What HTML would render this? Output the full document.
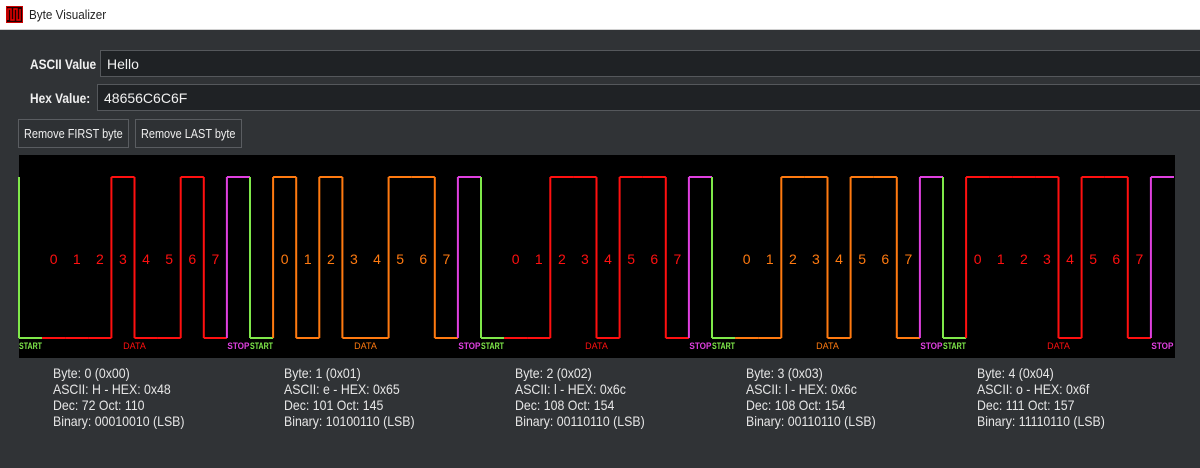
<!DOCTYPE html>
<html><head><meta charset="utf-8"><style>
body{margin:0;width:1200px;height:468px;background:#303336;font-family:"Liberation Sans",sans-serif;overflow:hidden;position:relative;color:#e6e6e6}
.tb{position:absolute;left:0;top:0;width:1200px;height:29px;background:#fff;border-bottom:1px solid #d0d0d0}
.tb span{position:absolute;left:29px;top:7px;font-size:13px;color:#222;transform:scaleX(.9);transform-origin:left}
.lbl{position:absolute;font-weight:bold;font-size:14px;color:#f0f0f0;transform:scaleX(.85);transform-origin:left}
.inp{position:absolute;background:#1f2225;border:1px solid #55585c;height:27px;box-sizing:border-box;font-size:14px;padding:5px 6px;color:#f0f0f0}
.btn{position:absolute;top:119px;height:29px;border:1px solid #5a5d61;background:#2e3134;box-sizing:border-box;font-size:13px;color:#eee;white-space:nowrap}
.btn span{position:absolute;left:5px;top:6px;transform:scaleX(.84);transform-origin:left}
.info{position:absolute;top:365px;font-size:14px;line-height:16px;color:#e6e6e6;white-space:pre;transform:scaleX(.88);transform-origin:left}
</style></head><body>
<div class="tb"><svg style="position:absolute;left:6px;top:6px" width="17" height="17"><rect x="0.5" y="0.5" width="16" height="16" fill="#200" stroke="#c00"/><path d="M2 14V3h3v11h3V3h3v11h3V3" fill="none" stroke="#e00" stroke-width="1.5"/></svg><span>Byte Visualizer</span></div>
<div class="lbl" style="left:30px;top:56px">ASCII Value</div>
<div class="inp" style="left:100px;top:50px;width:1110px">Hello</div>
<div class="lbl" style="left:30px;top:90px">Hex Value:</div>
<div class="inp" style="left:97px;top:84px;width:1110px">48656C6C6F</div>
<div class="btn" style="left:18px;width:111px"><span>Remove FIRST byte</span></div>
<div class="btn" style="left:135px;width:107px"><span>Remove LAST byte</span></div>
<svg id="s" style="position:absolute;left:0;top:0" width="1200" height="468"></svg>
<div id="info"></div>
<script>
var s=document.getElementById('s'),h='<rect x="19" y="155" width="1156" height="203" fill="#000"/>';
var bytes=[0x48,0x65,0x6c,0x6c,0x6f],ch="Hello",cols=['#ff1010','#ff7a10','#ff1010','#ff7a10','#ff1010'];
var G='#7fe84a',M='#e040e0',W=23.1,HI=177,LO=338,prev=HI,inf='';
for(var b=0;b<5;b++){var x0=19+231*b,c=cols[b];
 var bits=[0];for(var i=0;i<8;i++)bits.push((bytes[b]>>i)&1);bits.push(1);
 for(var i=0;i<10;i++){var col=i==0?G:i==9?M:c,x=x0+i*W,y=bits[i]?HI:LO,xe=Math.min(x+W,1174);
  if(bits[i]!=prev||(b==0&&i==0))h+='<line x1="'+x+'" y1="'+HI+'" x2="'+x+'" y2="'+LO+'" stroke="'+col+'" stroke-width="2"/>';
  h+='<line x1="'+x+'" y1="'+y+'" x2="'+xe+'" y2="'+y+'" stroke="'+col+'" stroke-width="2"/>';prev=bits[i];
  if(i>0&&i<9)h+='<text x="'+(x+W/2)+'" y="264" fill="'+c+'" font-size="14" text-anchor="middle" font-family="Liberation Sans">'+(i-1)+'</text>';}
 h+='<text x="'+x0+'" y="349" fill="'+G+'" font-size="9" font-weight="bold" font-family="Liberation Sans" textLength="23" lengthAdjust="spacingAndGlyphs">START</text>';
 h+='<text x="'+(x0+W*5)+'" y="349" fill="'+c+'" font-size="9" font-family="Liberation Sans" text-anchor="middle">DATA</text>';
 h+='<text x="'+(x0+W*9+0.5)+'" y="349" fill="'+M+'" font-size="9" font-weight="bold" font-family="Liberation Sans" textLength="22" lengthAdjust="spacingAndGlyphs">STOP</text>';
 var bin='';for(var i=0;i<8;i++)bin+=(bytes[b]>>i)&1;
 inf+='<div class="info" style="left:'+(53+231*b)+'px">Byte: '+b+' (0x0'+b+')\nASCII: '+ch[b]+' - HEX: 0x'+bytes[b].toString(16)+'\nDec: '+bytes[b]+' Oct: '+bytes[b].toString(8)+'\nBinary: '+bin+' (LSB)</div>';}
s.innerHTML=h;document.getElementById('info').innerHTML=inf;
</script></body></html>
